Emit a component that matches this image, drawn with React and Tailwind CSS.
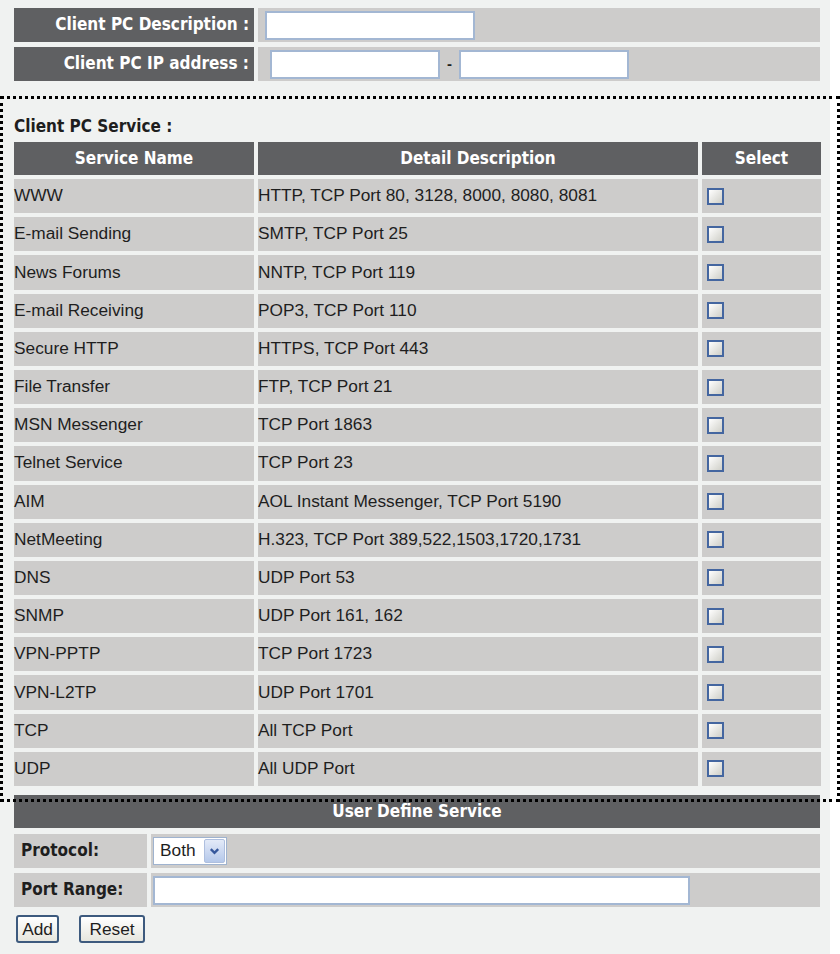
import { useState } from 'react';

const services = [
  { name: 'WWW', desc: 'HTTP, TCP Port 80, 3128, 8000, 8080, 8081' },
  { name: 'E-mail Sending', desc: 'SMTP, TCP Port 25' },
  { name: 'News Forums', desc: 'NNTP, TCP Port 119' },
  { name: 'E-mail Receiving', desc: 'POP3, TCP Port 110' },
  { name: 'Secure HTTP', desc: 'HTTPS, TCP Port 443' },
  { name: 'File Transfer', desc: 'FTP, TCP Port 21' },
  { name: 'MSN Messenger', desc: 'TCP Port 1863' },
  { name: 'Telnet Service', desc: 'TCP Port 23' },
  { name: 'AIM', desc: 'AOL Instant Messenger, TCP Port 5190' },
  { name: 'NetMeeting', desc: 'H.323, TCP Port 389,522,1503,1720,1731' },
  { name: 'DNS', desc: 'UDP Port 53' },
  { name: 'SNMP', desc: 'UDP Port 161, 162' },
  { name: 'VPN-PPTP', desc: 'TCP Port 1723' },
  { name: 'VPN-L2TP', desc: 'UDP Port 1701' },
  { name: 'TCP', desc: 'All TCP Port' },
  { name: 'UDP', desc: 'All UDP Port' }
];

const headFont = "font-['DejaVu_Sans_Condensed','DejaVu_Sans',sans-serif] font-bold font-stretch-condensed";
const bodyFont = "font-['Liberation_Sans',Arial,sans-serif]";
const inputCls = 'h-[29px] border-2 border-[#a3b7d3] bg-white outline-none px-1 text-[15px]';

export default function App() {
  const [checked, setChecked] = useState({});
  const [protocol, setProtocol] = useState('Both');

  const toggle = (name) => setChecked({ ...checked, [name]: !checked[name] });

  return (
    <div className="relative w-[840px] min-h-[954px] bg-white">
      <div className={`w-[830px] min-h-[954px] bg-[#f0f2f1] pt-[8px] pl-[14px] text-[#1e1e1e] ${bodyFont}`}>
        {/* Client PC */}
        <div className="grid grid-cols-[240px_562px] gap-x-[4px] gap-y-[5px]">
          <div className={`h-[34px] bg-[#5f6062] text-white text-[17px] flex items-center justify-end pr-[5px] ${headFont}`}>
            Client PC Description :
          </div>
          <div className="h-[34px] bg-[#cdcccb] flex items-center pl-[7px]">
            <input type="text" className={`${inputCls} w-[210px]`} />
          </div>
          <div className={`h-[34px] bg-[#5f6062] text-white text-[17px] flex items-center justify-end pr-[5px] ${headFont}`}>
            Client PC IP address :
          </div>
          <div className="h-[34px] bg-[#cdcccb] flex items-center pl-[12px]">
            <input type="text" className={`${inputCls} w-[170px]`} />
            <span className="mx-[7px] font-bold text-[15px]">-</span>
            <input type="text" className={`${inputCls} w-[170px]`} />
          </div>
        </div>

        {/* Client PC Service */}
        <div className={`mt-[35px] mb-[6px] text-[17px] leading-[20px] ${headFont}`}>Client PC Service :</div>
        <div className="grid grid-cols-[240px_440px_119px] gap-[4px] w-[807px]">
          <div className={`h-[33px] bg-[#5f6062] text-white text-[17px] flex items-center justify-center ${headFont}`}>Service Name</div>
          <div className={`h-[33px] bg-[#5f6062] text-white text-[17px] flex items-center justify-center ${headFont}`}>Detail Description</div>
          <div className={`h-[33px] bg-[#5f6062] text-white text-[17px] flex items-center justify-center ${headFont}`}>Select</div>
          {services.map((s) => (
            <div key={s.name} className="contents">
              <div className="h-[34.2px] bg-[#cdcccb] flex items-center text-[17.3px]">{s.name}</div>
              <div className="h-[34.2px] bg-[#cdcccb] flex items-center text-[17.3px]">{s.desc}</div>
              <div className="h-[34.2px] bg-[#cdcccb] flex items-center pl-[5px]">
                <input
                  type="checkbox"
                  checked={!!checked[s.name]}
                  onChange={() => toggle(s.name)}
                  className="appearance-none w-[17px] h-[17px] border-2 border-[#4466a0] bg-gradient-to-br from-white to-[#cfcfc8] checked:bg-[#4466a0]"
                />
              </div>
            </div>
          ))}
        </div>

        {/* User Define Service */}
        <div className="mt-[9px] w-[806px]">
          <div className={`h-[33px] bg-[#5f6062] text-white text-[17px] flex items-center justify-center ${headFont}`}>
            User Define Service
          </div>
          <div className="mt-[6px] grid grid-cols-[133px_1fr] gap-x-[4px]">
            <div className={`h-[34px] bg-[#cdcccb] flex items-center pl-[7px] text-[17px] ${headFont}`}>Protocol:</div>
            <div className="h-[34px] bg-[#cdcccb] flex items-center pl-[2px]">
              <div className="relative w-[74px] h-[28px]">
                <select
                  value={protocol}
                  onChange={(e) => setProtocol(e.target.value)}
                  className="appearance-none w-full h-full border border-[#9fb3cf] bg-white pl-[6px] text-[17.3px] outline-none"
                >
                  <option>Both</option>
                  <option>TCP</option>
                  <option>UDP</option>
                </select>
                <div className="absolute right-[2px] top-[2px] w-[21px] h-[24px] rounded-[2px] bg-gradient-to-b from-[#e3eaf8] to-[#b5c8ea] border border-[#aebfdf] flex items-center justify-center pointer-events-none">
                  <svg width="11" height="9" viewBox="0 0 11 9">
                    <path d="M1.8 2.2 L5.5 5.8 L9.2 2.2" fill="none" stroke="#36589c" strokeWidth="2.4" />
                  </svg>
                </div>
              </div>
            </div>
          </div>
          <div className="mt-[5px] grid grid-cols-[133px_1fr] gap-x-[4px]">
            <div className={`h-[34px] bg-[#cdcccb] flex items-center pl-[7px] text-[17px] ${headFont}`}>Port Range:</div>
            <div className="h-[34px] bg-[#cdcccb] flex items-center pl-[2px]">
              <input type="text" className={`${inputCls} w-[537px]`} />
            </div>
          </div>
        </div>

        <div className="mt-[8px] flex gap-[20px] pl-[2px]">
          <button className="h-[28px] w-[43px] rounded-[3px] border-2 border-[#3d5a7e] bg-gradient-to-b from-white to-[#e6e6de] text-[17.3px]">
            Add
          </button>
          <button className="h-[28px] w-[66px] rounded-[3px] border-2 border-[#3d5a7e] bg-gradient-to-b from-white to-[#e6e6de] text-[17.3px]">
            Reset
          </button>
        </div>
      </div>

      {/* focus outline */}
      <div className="absolute left-0 top-[96px] w-[840px] h-[706px] border-[3px] border-dotted border-black pointer-events-none" />
    </div>
  );
}
